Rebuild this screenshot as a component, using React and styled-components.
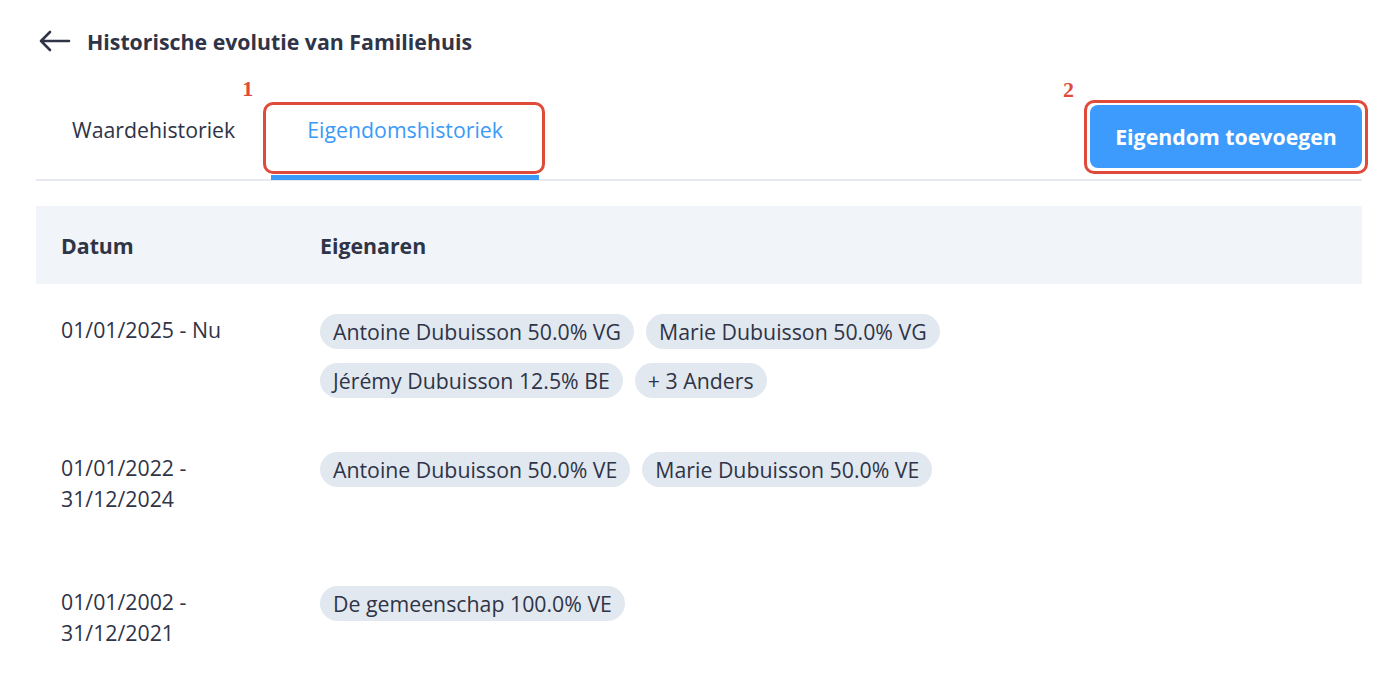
import React from "react";
import styled, { createGlobalStyle } from "styled-components";

const Global = createGlobalStyle`
  * { box-sizing: border-box; }
  body { margin: 0; background: #ffffff; font-family: "Open Sans", "Noto Sans", sans-serif; color: #2f3447; }
`;

const Page = styled.div`
  padding: 24px 25px 0 36px;
`;

const Header = styled.div`
  display: flex;
  align-items: center;
  gap: 16px;
  height: 34px;
  padding-left: 3px;
`;

const BackButton = styled.button`
  border: 0;
  background: none;
  padding: 0;
  display: flex;
  cursor: pointer;
  color: #2f3447;
`;

const Title = styled.h1`
  margin: 0;
  font-size: 21.3px;
  font-weight: 700;
  color: #2f3447;
`;

const TabBar = styled.div`
  display: flex;
  align-items: flex-end;
  margin-top: 44px;
  border-bottom: 2px solid #e6eaf0;
`;

const Tab = styled.button`
  position: relative;
  border: 0;
  background: none;
  font-family: inherit;
  font-size: 21.3px;
  line-height: 28px;
  padding: 14px 36px 31px;
  color: ${(p) => (p.$active ? "#3b9af8" : "#2f3447")};
  border-bottom: 5px solid ${(p) => (p.$active ? "#3b9af8" : "transparent")};
  margin-bottom: -1px;
  cursor: pointer;
`;

const Marker = styled.span`
  position: absolute;
  inset: ${(p) => p.$inset};
  border: 3px solid #e04a3b;
  border-radius: 10px;
  pointer-events: none;
`;

const MarkerNum = styled.span`
  position: absolute;
  left: ${(p) => p.$left};
  top: ${(p) => p.$top};
  font-family: "Liberation Serif", "DejaVu Serif", serif;
  font-weight: 700;
  font-size: 22px;
  line-height: 1;
  color: #e04a3b;
`;

const AddWrap = styled.div`
  position: relative;
  margin-left: auto;
  margin-bottom: 11px;
`;

const AddButton = styled.button`
  display: block;
  width: 272px;
  height: 63px;
  border: 0;
  border-radius: 8px;
  background: #3c9bfd;
  color: #ffffff;
  font-family: inherit;
  font-weight: 700;
  font-size: 21.3px;
  cursor: pointer;
`;

const Table = styled.div`
  margin-top: 25px;
`;

const HeadRow = styled.div`
  display: grid;
  grid-template-columns: 259px 1fr;
  align-items: center;
  height: 78px;
  background: #f1f4f9;
  padding-left: 25px;
`;

const HeadCell = styled.div`
  font-weight: 700;
  font-size: 21.3px;
  color: #2f3447;
`;

const Row = styled.div`
  display: grid;
  grid-template-columns: 259px 1fr;
  padding: 30px 0 24px 25px;
`;

const DateCell = styled.div`
  font-size: 21.3px;
  line-height: 31px;
  padding-right: 30px;
  min-height: 80px;
  color: #2f3447;
`;

const Chips = styled.div`
  display: flex;
  flex-wrap: wrap;
  align-content: flex-start;
  gap: 14px 12px;
  max-width: 640px;
`;

const Chip = styled.span`
  display: inline-flex;
  align-items: center;
  height: 35px;
  padding: 0 13px;
  border-radius: 18px;
  background: #e2e8f0;
  font-size: 21.3px;
  color: #2f3447;
  white-space: nowrap;
`;

const rows = [
  {
    date: "01/01/2025 - Nu",
    owners: [
      "Antoine Dubuisson 50.0% VG",
      "Marie Dubuisson 50.0% VG",
      "Jérémy Dubuisson 12.5% BE",
      "+ 3 Anders",
    ],
  },
  {
    date: "01/01/2022 - 31/12/2024",
    owners: ["Antoine Dubuisson 50.0% VE", "Marie Dubuisson 50.0% VE"],
  },
  {
    date: "01/01/2002 - 31/12/2021",
    owners: ["De gemeenschap 100.0% VE"],
  },
];

export default function App() {
  return (
    <Page>
      <Global />
      <Header>
        <BackButton aria-label="Terug">
          <svg width="32" height="22" viewBox="0 0 32 22" fill="none" stroke="currentColor" strokeWidth="2.6" strokeLinecap="round" strokeLinejoin="round">
            <path d="M30 11H2M11 2L2 11l9 9" />
          </svg>
        </BackButton>
        <Title>Historische evolutie van Familiehuis</Title>
      </Header>
      <TabBar>
        <Tab>Waardehistoriek</Tab>
        <Tab $active>
          Eigendomshistoriek
          <Marker $inset="0 -6px 1px -8px" />
          <MarkerNum $left="-29px" $top="-24px">1</MarkerNum>
        </Tab>
        <AddWrap>
          <AddButton>Eigendom toevoegen</AddButton>
          <Marker $inset="-5px -6px -6px -6px" />
          <MarkerNum $left="-27px" $top="-26px">2</MarkerNum>
        </AddWrap>
      </TabBar>
      <Table>
        <HeadRow>
          <HeadCell>Datum</HeadCell>
          <HeadCell>Eigenaren</HeadCell>
        </HeadRow>
        {rows.map((r) => (
          <Row key={r.date}>
            <DateCell>{r.date}</DateCell>
            <Chips>
              {r.owners.map((o) => (
                <Chip key={o}>{o}</Chip>
              ))}
            </Chips>
          </Row>
        ))}
      </Table>
    </Page>
  );
}
